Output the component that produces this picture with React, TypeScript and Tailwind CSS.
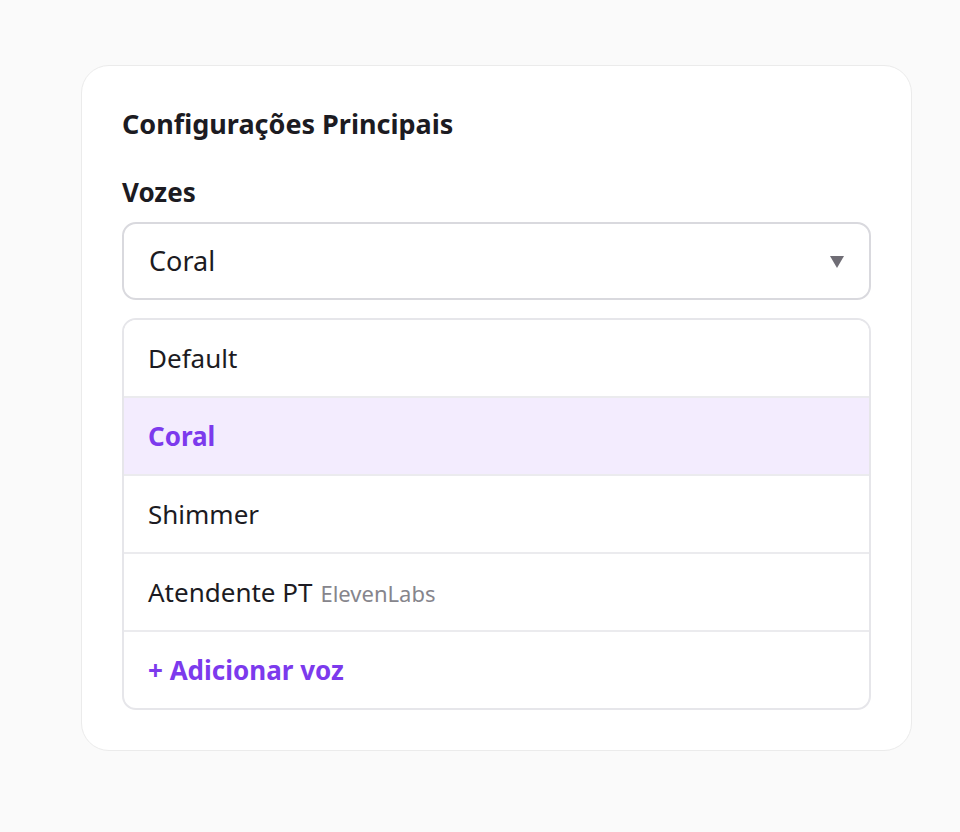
import React, { useState } from "react";

const voices = [
  { id: "default", name: "Default" },
  { id: "coral", name: "Coral" },
  { id: "shimmer", name: "Shimmer" },
  { id: "atendente", name: "Atendente PT", provider: "ElevenLabs" },
];

export default function App() {
  const [selected, setSelected] = useState("coral");
  const current = voices.find((v) => v.id === selected);

  return (
    <div
      className="min-h-screen bg-[#fafafa] pt-[65px] pl-[81px]"
      style={{ fontFamily: '"Noto Sans", "Open Sans", sans-serif' }}
    >
      <div className="w-[831px] rounded-[28px] border-[1.5px] border-[#ebebeb] bg-white px-[40px] pt-[40px] pb-[40px]">
        <h2 className="text-[27px] leading-[36px] font-bold text-[#1c1b22]">
          Configurações Principais
        </h2>

        <label className="mt-[34px] block text-[26px] leading-[33px] font-bold text-[#1c1b22]">
          Vozes
        </label>

        <button className="mt-[13px] flex h-[78px] w-full items-center justify-between rounded-[14px] border-2 border-[#d9d9de] bg-white pl-[25px] pr-[25px] text-left">
          <span className="text-[27px] text-[#1c1b22]">{current?.name}</span>
          <svg width="14" height="12" viewBox="0 0 14 12" className="mt-[2px]">
            <path d="M0 0 H14 L7 12 Z" fill="#6f6d75" />
          </svg>
        </button>

        <ul className="mt-[18px] overflow-hidden rounded-[14px] border-2 border-[#e6e6ea]">
          {voices.map((v) => {
            const active = v.id === selected;
            return (
              <li
                key={v.id}
                onClick={() => setSelected(v.id)}
                className={`flex h-[78px] cursor-pointer items-center border-b-2 border-[#ebebee] pl-[24px] ${
                  active ? "bg-[#f3ecfe]" : "bg-white"
                }`}
              >
                <span
                  className={`text-[26px] ${
                    active ? "font-bold text-[#7c3aed]" : "text-[#1c1b22]"
                  }`}
                >
                  {v.name}
                </span>
                {v.provider && (
                  <span className="ml-[8px] mt-[2px] text-[22px] text-[#86858c]">
                    {v.provider}
                  </span>
                )}
              </li>
            );
          })}
          <li className="flex h-[76px] cursor-pointer items-center pl-[24px]">
            <span className="text-[26px] font-bold text-[#7c3aed]">
              + Adicionar voz
            </span>
          </li>
        </ul>
      </div>
    </div>
  );
}
